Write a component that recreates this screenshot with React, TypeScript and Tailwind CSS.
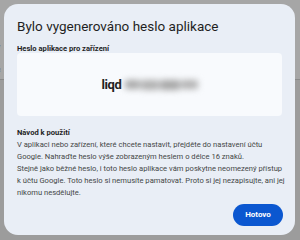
import React from "react";

const font = { fontFamily: "Roboto, 'Noto Sans', sans-serif" };

const BackgroundPage = () => (
  <div className="w-[300px] h-[240px] bg-[#9c9c9c]">
    <div className="h-[80px] w-full bg-[#a6a6a6] border-b border-[#8a8a8a] pt-[42px] text-[7px] text-[#555]">
      <div className="-ml-[3px]">v</div>
      <div className="-ml-[3px] mt-[12px]">c</div>
    </div>
  </div>
);

// obscured remainder of the password
const BlurredSecret = () => (
  <div className="ml-[3px] flex items-center gap-[1px] blur-[3px]">
    <div className="h-[9px] w-[15px] rounded-[2px] bg-[#a8a8a8]" />
    <div className="h-[10px] w-[18px] rounded-[2px] bg-[#b0b0b0]" />
    <div className="h-[10px] w-[20px] rounded-[2px] bg-[#a6a6a6]" />
    <div className="h-[9px] w-[17px] rounded-[2px] bg-[#b2b2b2]" />
  </div>
);

export default function App() {
  return (
    <div className="relative w-[300px] h-[240px] overflow-hidden" style={font}>
      <BackgroundPage />
      <div className="absolute left-[4px] top-[4px] w-[291px] h-[231px] rounded-[14px] bg-[#e9eef6] flex flex-col px-[12px] pt-[13px] pb-[9px]">
        <h2 className="text-[13.5px] leading-[18px] text-[#1f1f1f] ml-[1px]">
          Bylo vygenerováno heslo aplikace
        </h2>
        <div className="mt-[10px] ml-[1px] text-[7.6px] leading-[8px] font-bold text-[#1f1f1f]">
          Heslo aplikace pro zařízení
        </div>
        <div className="mt-[0px] ml-[1px] h-[63px] w-[265px] rounded-[4px] bg-[#f8fafd] flex items-center justify-center">
          <span className="text-[13px] font-bold text-[#1f1f1f] tracking-tight">liqd</span>
          <BlurredSecret />
        </div>
        <div className="mt-[12px] ml-[1px] text-[7.6px] leading-[10px] font-bold text-[#1f1f1f]">
          Návod k použití
        </div>
        <p className="ml-[1px] mt-[1px] text-[7.6px] leading-[12px] text-[#444746] w-[268px]">
          V aplikaci nebo zařízení, které chcete nastavit, přejděte do nastavení účtu Google. Nahraďte heslo výše zobrazeným heslem o délce 16 znaků.
          <br />
          Stejně jako běžné heslo, i toto heslo aplikace vám poskytne neomezený přístup k účtu Google. Toto heslo si nemusíte pamatovat. Proto si jej nezapisujte, ani jej nikomu nesdělujte.
        </p>
        <div className="mt-auto flex justify-end">
          <button className="h-[22px] w-[50px] rounded-full bg-[#0b57d0] text-white text-[8px] font-bold">
            Hotovo
          </button>
        </div>
      </div>
    </div>
  );
}
